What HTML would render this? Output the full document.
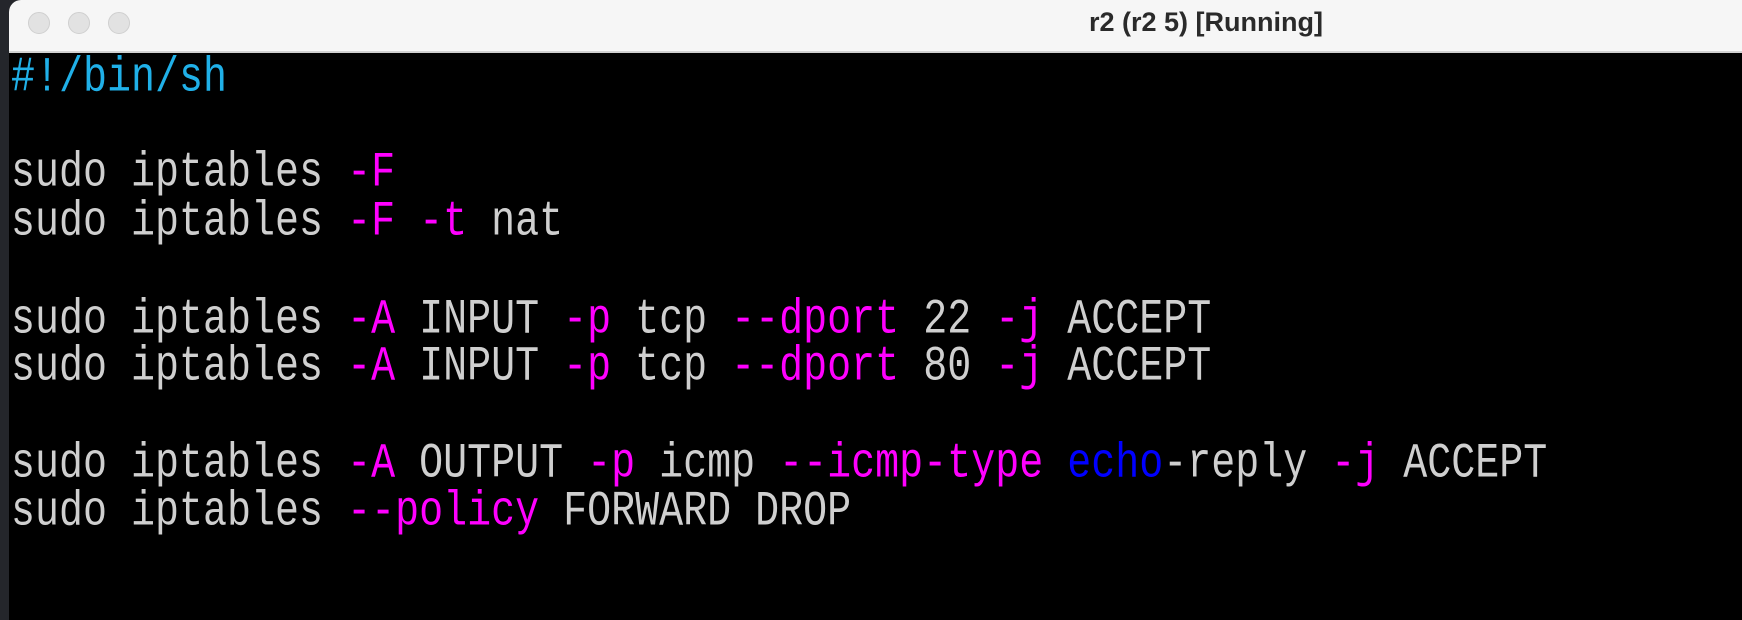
<!DOCTYPE html>
<html><head><meta charset="utf-8"><style>
html,body{margin:0;padding:0;width:1742px;height:604px;overflow:hidden;background:#24262b;}
.win{position:absolute;left:9px;top:0;width:1760px;height:620px;background:#000;border-top-left-radius:12px;overflow:hidden;}
.tb{position:absolute;left:0;top:0;right:0;height:51px;background:#f6f6f6;border-bottom:2px solid #d2d2d2;}
.c{position:absolute;top:12px;width:22px;height:22px;border-radius:50%;background:#e2e2e2;border:1px solid #cfcfcf;box-sizing:border-box;}
.title{position:absolute;left:1080px;top:7px;font:bold 27px "Liberation Sans",sans-serif;color:#2a2a2a;}
.l{position:absolute;left:2px;height:48px;line-height:48px;font:40px "Liberation Mono",monospace;color:#cfcfcf;white-space:pre;transform:scaleY(1.22);transform-origin:0 35px;}
.m{color:#ff00ff}.b{color:#0000ff}.cy{color:#20b0e8}
</style></head><body>
<div class="win">
<div class="tb">
<div class="c" style="left:19px"></div>
<div class="c" style="left:59px"></div>
<div class="c" style="left:99px"></div>
<div class="title">r2 (r2 5) [Running]</div>
</div>
<div class="l cy" style="top:59px">#!/bin/sh</div>
<div class="l" style="top:154px">sudo iptables <span class="m">-F</span></div>
<div class="l" style="top:203px">sudo iptables <span class="m">-F -t</span> nat</div>
<div class="l" style="top:301px">sudo iptables <span class="m">-A</span> INPUT <span class="m">-p</span> tcp <span class="m">--dport</span> 22 <span class="m">-j</span> ACCEPT</div>
<div class="l" style="top:348px">sudo iptables <span class="m">-A</span> INPUT <span class="m">-p</span> tcp <span class="m">--dport</span> 80 <span class="m">-j</span> ACCEPT</div>
<div class="l" style="top:445px">sudo iptables <span class="m">-A</span> OUTPUT <span class="m">-p</span> icmp <span class="m">--icmp-type</span> <span class="b">echo</span>-reply <span class="m">-j</span> ACCEPT</div>
<div class="l" style="top:493px">sudo iptables <span class="m">--policy</span> FORWARD DROP</div>
</div>
</body></html>
